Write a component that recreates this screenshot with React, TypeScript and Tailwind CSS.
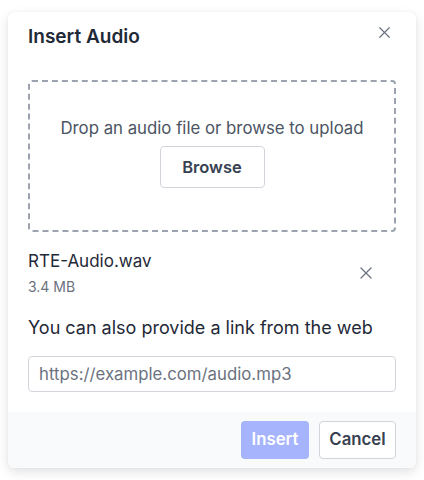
import React from "react";
import { X } from "lucide-react";

const App: React.FC = () => {
  return (
    <div
      className="w-[424px] h-[480px] bg-white pt-[12px] px-[8px]"
      style={{ fontFamily: "Inter, 'Noto Sans', sans-serif" }}
    >
      <div className="w-[408px] rounded-md bg-white shadow-[0_4px_12px_rgba(0,0,0,0.12),0_0_2px_rgba(0,0,0,0.06)] overflow-hidden">
        <div className="px-5 pt-[11px]">
          <div className="flex items-center justify-between h-[28px]">
            <h2 className="text-[19px] leading-[28px] font-semibold text-[#1f2937]">
              Insert Audio
            </h2>
            <button className="mr-[2px] -mt-[10px] text-[#6b7280]">
              <X className="h-[19px] w-[19px]" strokeWidth={1.5} />
            </button>
          </div>

          <div className="mt-[29px] border-2 border-dashed border-[#9ca3af] rounded-[4px] pt-[34px] pb-[42px] flex flex-col items-center">
            <p className="text-[16.8px] leading-[24px] text-[#4b5563]">
              Drop an audio file or browse to upload
            </p>
            <button className="mt-[6px] h-[42px] w-[105px] border border-[#d1d5db] rounded-[4px] bg-white text-[16.5px] font-semibold text-[#374151]">
              Browse
            </button>
          </div>

          <div className="mt-[17px] flex items-center justify-between">
            <div>
              <div className="text-[17px] leading-[24px] font-normal text-[#1f2937]">
                RTE-Audio.wav
              </div>
              <div className="mt-[4px] text-[14px] leading-[20px] text-[#6b7280]">
                3.4 MB
              </div>
            </div>
            <button className="mr-[20px] text-[#6b7280]">
              <X className="h-[20px] w-[20px]" strokeWidth={1.5} />
            </button>
          </div>

          <p className="mt-[17px] text-[18px] leading-[28px] text-[#1f2937]">
            You can also provide a link from the web
          </p>

          <input
            type="text"
            placeholder="https://example.com/audio.mp3"
            className="mt-[14px] w-full h-[36px] border border-[#d1d5db] rounded-[4px] px-[10px] text-[16.8px] text-[#374151] placeholder:text-[#6b7280] outline-none"
          />
        </div>

        <div className="mt-[20px] bg-[#f9fafb] h-[56px] px-5 flex items-center justify-end gap-[10px]">
          <button className="h-[38px] w-[68px] rounded-[4px] bg-[#a5b4fc] text-white text-[16.8px] font-semibold">
            Insert
          </button>
          <button className="h-[38px] w-[77px] rounded-[4px] border border-[#d1d5db] bg-white text-[#374151] text-[16.8px] font-semibold">
            Cancel
          </button>
        </div>
      </div>
    </div>
  );
};

export default App;
